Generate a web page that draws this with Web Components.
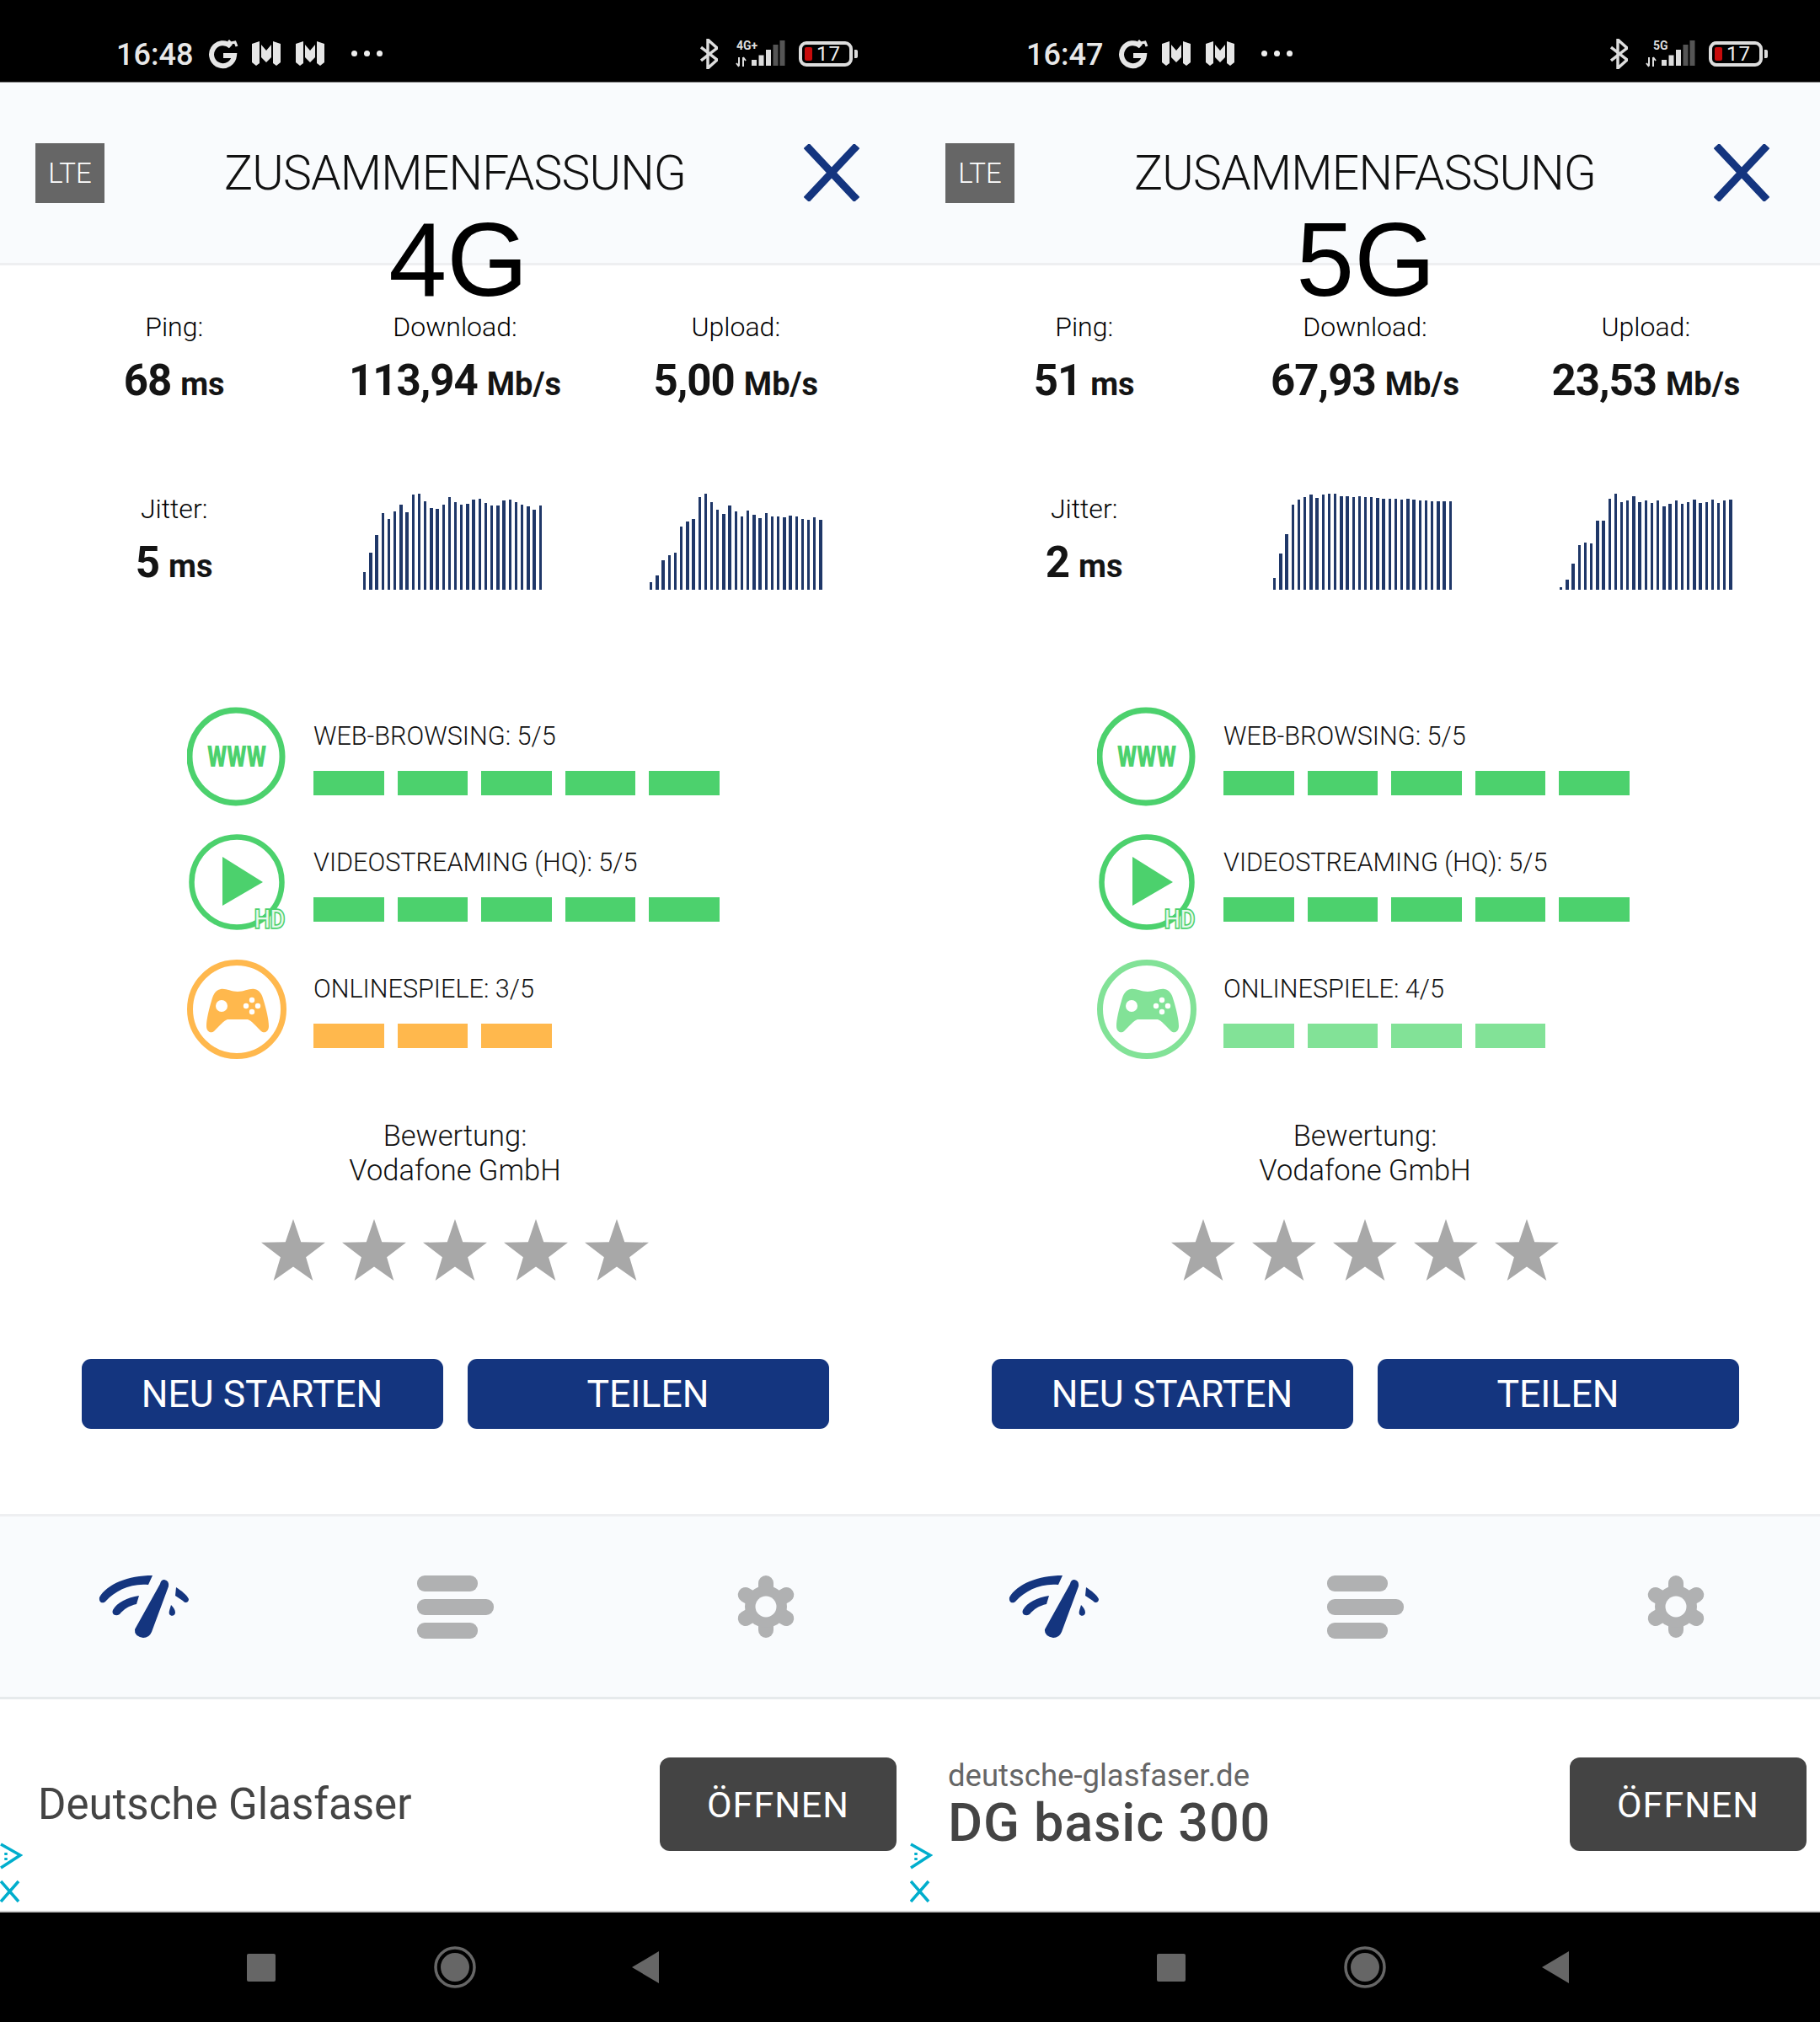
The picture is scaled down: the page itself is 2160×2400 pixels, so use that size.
<!DOCTYPE html>
<html lang="de">
<head>
<meta charset="utf-8">
<title>Zusammenfassung</title>
<style>
  html, body { margin: 0; background: #fff; }
  body { width: 2160px; height: 2400px; display: grid; grid-template-columns: 1080px 1080px; overflow: hidden; font-family: Roboto, "Liberation Sans", sans-serif; }
</style>
</head>
<body>
<speed-panel time="16:48" net="4G+" tech="4G" tech-shift="8" ping="68" jitter="5" down="113,94" up="5,00"
  down-bars="62,132,194,274,252,280,302,277,338,342,314,292,289,302,330,311,302,305,320,323,308,299,299,317,320,311,302,296,284,299"
  up-bars="28,52,105,123,132,225,243,252,330,342,311,286,271,299,280,262,283,268,256,274,262,262,259,265,262,252,249,258,249"
  games="3" games-color="#ffb84d" ad="name"></speed-panel>
<speed-panel time="16:47" net="5G" tech="5G" tech-shift="2" ping="51" jitter="2" down="67,93" up="23,53"
  down-bars="43,129,198,302,320,329,338,326,338,342,342,332,332,329,332,329,329,326,323,323,323,320,323,320,317,317,314,314,314,314"
  up-bars="8,36,92,159,169,165,246,246,323,342,311,317,332,311,317,308,317,298,305,317,305,311,320,308,311,320,308,317,320"
  games="4" games-color="#82e297" ad="domain"></speed-panel>

<script>
const FONT = 'Roboto, "Liberation Sans", sans-serif';
const NAVY = '#14357f';

class StatusBar extends HTMLElement {
  constructor() {
    super();
    this.root = this.attachShadow({ mode: 'open' });
  }

  connectedCallback() {
    const net = this.getAttribute('net');
    const netX = net === '5G' ? 9 : 1;
    const bars = [[19, 27, 18], [27.5, 21.5, 0], [36, 15, 0], [44.5, 9, 1], [52.5, 4, 1]]
      .map(([x, y, dim]) => `<rect x="${x}" y="${y}" width="6" height="${34 - y}" fill="${dim === 1 ? '#555' : '#ddd'}"/>`)
      .join('');
    const mLogo = `
      <svg width="34" height="29" viewBox="0 0 34 29">
        <path fill="#e6e6e6" d="M0 3 9 0 9 26 5 29 0 25zM34 3 25 0 25 26 29 29 34 25zM11 4 17 11 23 4 23 19 17 25 11 19z"/>
      </svg>`;
    this.root.innerHTML = `
      <style>
        :host { display: flex; align-items: center; box-sizing: border-box; height: 98px; padding: 30px 62px 0 138px; background: #000; color: #e8e8e8; border-bottom: 1px solid #777; font-family: ${FONT}; }
        .time { font-size: 36px; font-weight: 500; width: 90px; white-space: nowrap; margin-right: 19px; position: relative; top: 1px; }
        .g { margin-right: 16px; }
        .m1 { margin-right: 18px; display: flex; }
        .m2 { margin-right: 32px; display: flex; }
        .dots { display: flex; gap: 8px; }
        .dots i { width: 7px; height: 7px; border-radius: 50%; background: #eee; }
        .right { margin-left: auto; display: flex; align-items: center; }
        .bt { margin-right: 21px; }
        .signal { margin-right: 16px; overflow: visible; margin-top: -4px; }
        .battery { box-sizing: border-box; width: 64px; height: 30px; border: 4px solid #ddd; border-radius: 9px; display: flex; align-items: center; padding-left: 3px; gap: 5px; color: #eee; font-size: 24px; line-height: 22px; }
        .battery b { width: 9px; height: 16px; background: #c70b0b; border-radius: 2px; }
        .battery span { font-weight: 400; letter-spacing: 1px; }
        .cap { width: 4px; height: 10px; background: #ddd; border-radius: 0 2px 2px 0; margin-left: 2px; }
      </style>
      <span class="time">${this.getAttribute('time')}</span>
      <svg class="g" width="36" height="36" viewBox="0 0 36 36" fill="none" stroke="#e6e6e6" stroke-width="6">
        <path d="M27 9A13.5 13.5 0 1 0 31 20H18"/>
        <path stroke-width="3" d="M24 2 27 5 32 4 34 9"/>
      </svg>
      <span class="m1">${mLogo}</span>
      <span class="m2">${mLogo}</span>
      <span class="dots"><i></i><i></i><i></i></span>
      <div class="right">
        <svg class="bt" width="21" height="36" viewBox="0 0 21 36" fill="none" stroke="#ddd" stroke-width="3.4">
          <path d="M1 10 20 25 9 35V1L20 11 1 26"/>
        </svg>
        <svg class="signal" width="59" height="36" viewBox="0 0 59 36">
          <text x="${netX}" y="15" font-family="Roboto" font-weight="700" font-size="14" fill="#ddd">${net}</text>
          <path stroke="#ddd" stroke-width="2" fill="none" d="M4 24V34M1 31 4 35M9 35V24M9 24 12 28"/>
          ${bars}
        </svg>
        <div class="battery"><b></b><span>17</span></div>
        <div class="cap"></div>
      </div>
    `;
  }
}

class SummaryHeader extends HTMLElement {
  constructor() {
    super();
    this.root = this.attachShadow({ mode: 'open' });
    this.root.innerHTML = `
      <style>
        :host { display: grid; grid-template-columns: 1fr auto 1fr; align-items: center; position: relative; box-sizing: border-box; height: 217px; padding: 0 42px; background: #f9fbfd; border-bottom: 3px solid #eeeff1; font-family: ${FONT}; }
        .lte { justify-self: start; width: 82px; height: 71px; background: #666; color: #fff; display: flex; align-items: center; justify-content: center; font-size: 33px; font-weight: 300; }
        .title { font-size: 57px; font-weight: 300; letter-spacing: -0.8px; color: #111; white-space: nowrap; }
        svg { justify-self: end; margin-right: 18px; }
        .tech { position: absolute; left: var(--tech-shift, 0); right: 0; top: 148px; text-align: center; font: 124px/124px "Liberation Sans", Arial, sans-serif; color: #000; }
      </style>
      <div class="lte">LTE</div>
      <div class="title">ZUSAMMENFASSUNG</div>
      <svg width="66" height="68" viewBox="0 0 66 68" fill="none" stroke="${NAVY}" stroke-width="9"><path d="M3 2 63 66M63 2 3 66"/></svg>
      <div class="tech"><slot></slot></div>
    `;
  }
}

class MetricCell extends HTMLElement {
  constructor() {
    super();
    this.root = this.attachShadow({ mode: 'open' });
  }

  connectedCallback() {
    this.root.innerHTML = `
      <style>
        :host { display: flex; flex-direction: column; align-items: center; font-family: ${FONT}; color: #141414; }
        .label { font-size: 32px; line-height: 36px; font-weight: 300; color: #000; }
        .value { display: flex; align-items: baseline; gap: 11px; margin-top: 16px; line-height: 60px; font-size: 51px; font-weight: 700; letter-spacing: -1px; }
        .unit { font-size: 38px; font-weight: 700; letter-spacing: 0; }
      </style>
      <div class="label"><slot></slot></div>
      <div class="value"><span>${this.getAttribute('value')}</span><span class="unit">${this.getAttribute('unit')}</span></div>
    `;
  }
}

class BarChart extends HTMLElement {
  constructor() {
    super();
    this.root = this.attachShadow({ mode: 'open' });
  }

  connectedCallback() {
    const bars = this.getAttribute('bars').split(',')
      .map((h) => `<i style="height:${(h / 3).toFixed(1)}px"></i>`)
      .join('');
    this.root.innerHTML = `
      <style>
        :host { display: flex; align-items: flex-end; justify-content: center; height: 114px; gap: 3.8px; }
        i { display: block; width: 3.4px; background: #1f3768; }
      </style>
      ${bars}
    `;
  }
}

class QualityRow extends HTMLElement {
  constructor() {
    super();
    this.root = this.attachShadow({ mode: 'open' });
  }

  connectedCallback() {
    const score = Number(this.getAttribute('score'));
    const color = this.getAttribute('color');
    const cells = '<i></i>'.repeat(score);
    this.root.innerHTML = `
      <style>
        :host { display: flex; height: 120px; font-family: ${FONT}; color: #111; }
        .icon { width: 150px; flex: none; }
        .label { margin-top: 18px; font-size: 30.6px; line-height: 36px; font-weight: 300; white-space: nowrap; }
        .cells { display: flex; gap: 16px; margin-top: 23px; }
        i { display: block; width: 83.5px; height: 29px; background: ${color}; }
      </style>
      <div class="icon"><slot name="icon"></slot></div>
      <div>
        <div class="label"><slot></slot></div>
        <div class="cells">${cells}</div>
      </div>
    `;
  }
}

class RatingBlock extends HTMLElement {
  constructor() {
    super();
    this.root = this.attachShadow({ mode: 'open' });
    const star = `<svg width="76" height="74" viewBox="0 0 78 76"><path fill="#a8a8a8" d="M39 0 48.5 28 78 28.5 54.5 46.5 63 75 39 58 15 75 23.500 46.500 0 28.500 29.500 28z"/></svg>`;
    this.root.innerHTML = `
      <style>
        :host { display: flex; flex-direction: column; align-items: center; font-family: ${FONT}; color: #111; }
        .text { font-size: 34.5px; line-height: 41px; font-weight: 300; text-align: center; }
        .stars { display: flex; gap: 20px; margin-top: 37px; }
        svg { display: block; }
      </style>
      <div class="text"><slot></slot></div>
      <div class="stars">${star.repeat(5)}</div>
    `;
  }
}

class ActionButtons extends HTMLElement {
  constructor() {
    super();
    this.root = this.attachShadow({ mode: 'open' });
    this.root.innerHTML = `
      <style>
        :host { display: grid; grid-template-columns: 429px 429px; gap: 29px; justify-content: center; font-family: ${FONT}; }
        div { height: 83px; background: ${NAVY}; color: #fff; border-radius: 11px; display: flex; align-items: center; justify-content: center; font-size: 44.5px; }
      </style>
      <div>NEU STARTEN</div>
      <div>TEILEN</div>
    `;
  }
}

class TabNav extends HTMLElement {
  constructor() {
    super();
    this.root = this.attachShadow({ mode: 'open' });
    const teeth = [0, 60, 120, 180, 240, 300]
      .map((a) => `<line x1="37" y1="37" x2="37" y2="9" transform="rotate(${a} 37 37)"/>`)
      .join('');
    this.root.innerHTML = `
      <style>
        :host { display: grid; grid-template-columns: repeat(3, 1fr); align-items: center; box-sizing: border-box; height: 220px; background: #f9fbfd; border-top: 3px solid #eeeff1; border-bottom: 3px solid #e6eaec; }
        .tab { display: flex; justify-content: center; }
        .wifi { transform: translateX(-9px); }
        .gear { transform: translateX(9px); }
        .menu { display: flex; flex-direction: column; gap: 9px; }
        .menu i { display: block; width: 72px; height: 19px; background: #b0b1b2; border-radius: 9px; }
        .menu i:nth-child(2) { width: 91px; }
      </style>
      <div class="tab">
        <svg class="wifi" width="108" height="75" viewBox="0 0 108 75" fill="${NAVY}">
          <path d="M78 5Q84 6 83 13L63 67Q60 74 53 74 42 72 43 64L73 10Q74 5 78 5Z"/>
          <path d="M1 26C10 10 35 0 64 0L59 11C38 9 20 18 9 30 6 34 0 33 1 26Z"/>
          <path d="M48 24 45 34C36 36 30 40 25 46 20 49 15 46 17 41 22 32 34 26 48 24Z"/>
          <path d="M92 14C98 18 105 23 107 28 107 33 102 33 100 30L91 24Z"/>
          <path d="M86 35C89 38 91 41 91 44 91 48 86 49 84 46 83 43 85 39 86 35Z"/>
        </svg>
      </div>
      <div class="tab"><div class="menu"><i></i><i></i><i></i></div></div>
      <div class="tab">
        <svg class="gear" width="74" height="74" viewBox="0 0 74 74">
          <g stroke="#b0b1b2" stroke-width="18" stroke-linecap="round">${teeth}</g>
          <circle cx="37" cy="37" r="25" fill="#b0b1b2"/>
          <circle cx="37" cy="37" r="12.500" fill="#f9fbfd"/>
        </svg>
      </div>
    `;
  }
}

class AdBanner extends HTMLElement {
  constructor() {
    super();
    this.root = this.attachShadow({ mode: 'open' });
    this.root.innerHTML = `
      <style>
        :host { display: flex; align-items: center; justify-content: space-between; position: relative; box-sizing: border-box; height: 251px; padding: 0 16px 0 45px; background: #fff; font-family: ${FONT}; color: #444; }
        .button { width: 281px; height: 111px; margin-top: -2px; background: #444; color: #fff; border-radius: 12px; display: flex; align-items: center; justify-content: center; font-size: 43px; letter-spacing: 1px; }
        .info { position: absolute; left: 0; top: 170px; }
        .text { margin-top: -2px; }
      </style>
      <div class="text"><slot></slot></div>
      <div class="button">ÖFFNEN</div>
      <svg class="info" width="27" height="72" viewBox="0 0 27 72" fill="none" stroke="#00aecd" stroke-width="3.500">
        <path d="M1 2 24 15 1 30"/>
        <path stroke-dasharray="3 3" d="M7 12V22"/>
        <path d="M1 46 22 70M22 46 1 70"/>
      </svg>
    `;
  }
}

class SystemNav extends HTMLElement {
  constructor() {
    super();
    this.root = this.attachShadow({ mode: 'open' });
    this.root.innerHTML = `
      <style>
        :host { display: grid; grid-template-columns: 230px 230px 230px; justify-content: center; align-items: center; height: 132px; background: #000; border-top: 2px solid #ccc; box-sizing: border-box; }
        div { display: flex; justify-content: center; }
        .square { width: 34px; height: 33px; background: #666; border-radius: 2px; }
        .back { margin-right: 8px; }
      </style>
      <div><span class="square"></span></div>
      <div>
        <svg width="50" height="50" viewBox="0 0 50 50"><circle cx="25" cy="25" r="23" fill="none" stroke="#666" stroke-width="3.500"/><circle cx="25" cy="25" r="17" fill="#666"/></svg>
      </div>
      <div>
        <svg class="back" width="32" height="38" viewBox="0 0 32 38"><path fill="#666" d="M32 0V38L0 19Z"/></svg>
      </div>
    `;
  }
}

class SpeedPanel extends HTMLElement {
  constructor() {
    super();
    this.root = this.attachShadow({ mode: 'open' });
  }

  connectedCallback() {
    const a = (name) => this.getAttribute(name);
    const green = '#4cd16d';
    const gamesColor = a('games-color');
    const adText = a('ad') === 'name'
      ? '<div class="ad-name">Deutsche Glasfaser</div>'
      : '<div class="ad-domain">deutsche-glasfaser.de</div><div class="ad-title">DG basic 300</div>';
    this.root.innerHTML = `
      <style>
        :host { display: flex; flex-direction: column; width: 1080px; height: 2400px; overflow: hidden; background: #fff; }
        .metrics { display: grid; grid-template-columns: repeat(3, 1fr); grid-template-rows: 216px 114px; padding: 55px 40px 0; height: 523px; box-sizing: border-box; }
        .chart-a { margin-right: 6px; }
        .quality { display: flex; flex-direction: column; gap: 30px; padding-left: 222px; }
        .quality svg { display: block; }
        rating-block { margin-top: 70px; }
        action-buttons { margin-top: 92px; }
        tab-nav { margin-top: 101px; }
        .ad-name { font-size: 51px; color: #444; font-weight: 400; }
        .ad-domain { font-size: 36.5px; color: #666; line-height: 44px; }
        .ad-title { font-size: 63px; color: #444; font-weight: 500; line-height: 68px; letter-spacing: 0.8px; }
      </style>
      <status-bar time="${a('time')}" net="${a('net')}"></status-bar>
      <summary-header style="--tech-shift:${a('tech-shift')}px">${a('tech')}</summary-header>
      <div class="metrics">
        <metric-cell value="${a('ping')}" unit="ms">Ping:</metric-cell>
        <metric-cell value="${a('down')}" unit="Mb/s">Download:</metric-cell>
        <metric-cell value="${a('up')}" unit="Mb/s">Upload:</metric-cell>
        <metric-cell value="${a('jitter')}" unit="ms">Jitter:</metric-cell>
        <bar-chart class="chart-a" bars="${a('down-bars')}"></bar-chart>
        <bar-chart bars="${a('up-bars')}"></bar-chart>
      </div>
      <div class="quality">
        <quality-row score="5" color="${green}">
          <svg slot="icon" width="118" height="120" viewBox="0 0 118 120">
            <circle cx="58" cy="60" r="55" fill="none" stroke="${green}" stroke-width="7"/>
            <text x="59" y="72" text-anchor="middle" font-family="Roboto" font-weight="900" font-size="35" fill="${green}" textLength="70" lengthAdjust="spacingAndGlyphs">WWW</text>
          </svg>
          WEB-BROWSING: 5/5
        </quality-row>
        <quality-row score="5" color="${green}">
          <svg slot="icon" width="124" height="126" viewBox="0 0 124 126">
            <circle cx="59" cy="59" r="53.500" fill="none" stroke="${green}" stroke-width="6.500"/>
            <path fill="${green}" d="M42 29 90 59 42 87Z"/>
            <text x="98" y="113" text-anchor="middle" font-family="Roboto" font-weight="400" font-size="29" fill="#e6f8ea" stroke="${green}" stroke-width="3.500" paint-order="stroke" textLength="36" lengthAdjust="spacingAndGlyphs">HD</text>
          </svg>
          VIDEOSTREAMING (HQ): 5/5
        </quality-row>
        <quality-row score="${a('games')}" color="${gamesColor}">
          <svg slot="icon" width="120" height="120" viewBox="0 0 120 120">
            <circle cx="59" cy="60" r="55.500" fill="none" stroke="${gamesColor}" stroke-width="7"/>
            <path fill="${gamesColor}" d="M40 36C46 35 52 39 60 39 68 39 74 35 80 36 86 37 89 42 91 50 94 60 97 72 97 80 97 87 91 89 88 86 82 80 76 73 72 72H48C44 73 38 80 32 86 29 89 23 87 23 80 23 72 26 60 29 50 31 42 34 37 40 36Z"/>
            <g fill="#fff">
              <circle cx="41" cy="56" r="7"/>
              <circle cx="77" cy="49" r="3.200"/><circle cx="70" cy="56" r="3.200"/><circle cx="84" cy="56" r="3.200"/><circle cx="77" cy="63" r="3.200"/>
            </g>
          </svg>
          ONLINESPIELE: ${a('games')}/5
        </quality-row>
      </div>
      <rating-block>Bewertung:<br>Vodafone GmbH</rating-block>
      <action-buttons></action-buttons>
      <tab-nav></tab-nav>
      <ad-banner>${adText}</ad-banner>
      <system-nav></system-nav>
    `;
  }
}

customElements.define('status-bar', StatusBar);
customElements.define('summary-header', SummaryHeader);
customElements.define('metric-cell', MetricCell);
customElements.define('bar-chart', BarChart);
customElements.define('quality-row', QualityRow);
customElements.define('rating-block', RatingBlock);
customElements.define('action-buttons', ActionButtons);
customElements.define('tab-nav', TabNav);
customElements.define('ad-banner', AdBanner);
customElements.define('system-nav', SystemNav);
customElements.define('speed-panel', SpeedPanel);
</script>
</body>
</html>
